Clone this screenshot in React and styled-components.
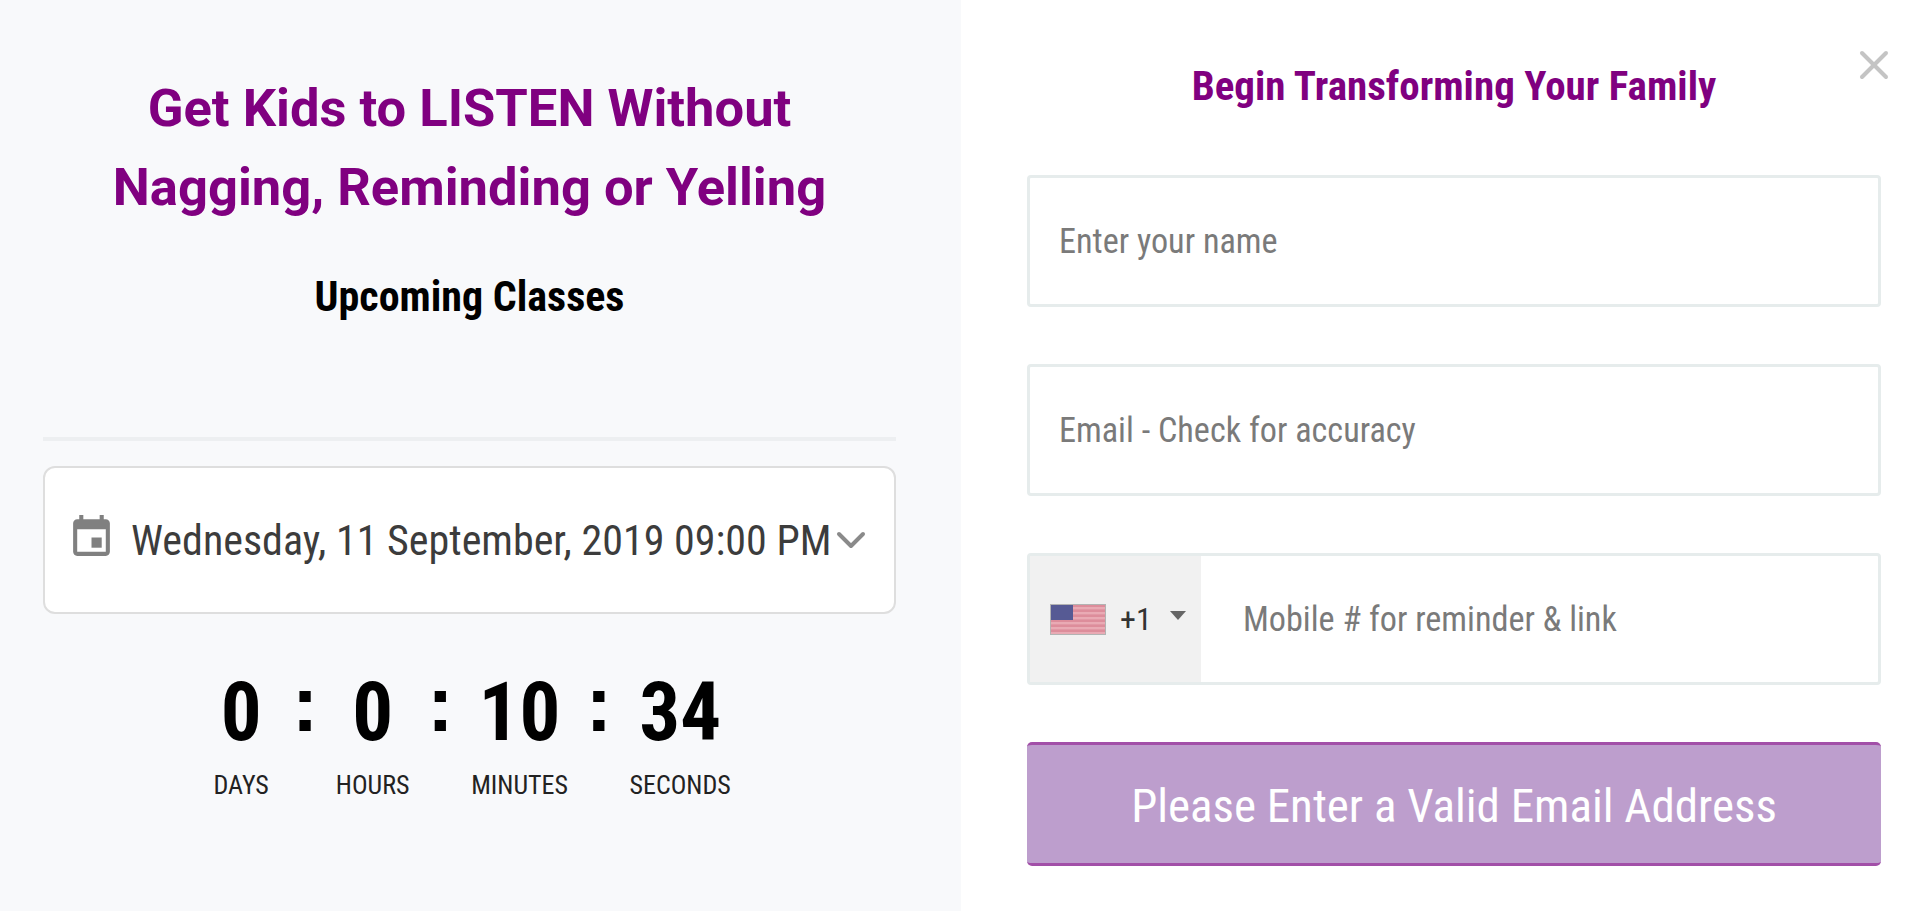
import React from "react";
import styled, { createGlobalStyle } from "styled-components";
import { X, ChevronDown } from "lucide-react";

const GlobalStyle = createGlobalStyle`
  * { box-sizing: border-box; }
  html, body { margin: 0; height: 100%; background: #fff; }
  body { font-family: Roboto, "Liberation Sans", sans-serif; font-stretch: 75%; }
`;

const units = [
  { value: "0", label: "DAYS" },
  { value: "0", label: "HOURS" },
  { value: "10", label: "MINUTES" },
  { value: "34", label: "SECONDS" },
];

const FlagIcon = () => (
  <svg width="56" height="31" viewBox="0 0 56 31">
    <rect width="56" height="31" fill="#dd8d9b" />
    {[3, 8, 13, 18, 23, 28].map((y) => (
      <rect key={y} y={y} width="56" height="2.4" fill="#e9aab4" />
    ))}
    <rect width="23" height="16" fill="#565a94" />
    <rect x="0.5" y="0.5" width="55" height="30" fill="none" stroke="#b3b3b3" />
  </svg>
);

const CalendarIcon = () => (
  <CalendarSvg width="49" height="49" viewBox="0 0 24 24" fill="#808080">
    <path d="M19 3h-1V1h-2v2H8V1H6v2H5c-1.1 0-2 .9-2 2v14c0 1.1.9 2 2 2h14c1.1 0 2-.9 2-2V5c0-1.1-.9-2-2-2zm0 16H5V8h14v11z" />
    <path d="M12 12h5v5h-5z" />
  </CalendarSvg>
);

const App = () => (
  <Page>
    <GlobalStyle />
    <Left>
      <Headline>
        Get Kids to LISTEN Without
        <br />
        Nagging, Reminding or Yelling
      </Headline>
      <Upcoming>Upcoming Classes</Upcoming>
      <Divider />
      <DateSelect>
        <CalendarIcon />
        <DateText>Wednesday, 11 September, 2019 09:00 PM</DateText>
        <ChevronDown size={48} color="#8a8a8a" strokeWidth={2} />
      </DateSelect>
      <Countdown>
        {units.map((unit, i) => (
          <React.Fragment key={unit.label}>
            {i > 0 && <Colon>:</Colon>}
            <Unit>
              <Digits>{unit.value}</Digits>
              <UnitLabel>{unit.label}</UnitLabel>
            </Unit>
          </React.Fragment>
        ))}
      </Countdown>
    </Left>
    <Right>
      <CloseButton aria-label="Close">
        <X size={48} color="#c4c4c4" strokeWidth={2} />
      </CloseButton>
      <FormTitle>Begin Transforming Your Family</FormTitle>
      <Field>
        <Input placeholder="Enter your name" />
      </Field>
      <Field>
        <Input placeholder="Email - Check for accuracy" />
      </Field>
      <Field>
        <CountryCode>
          <FlagIcon />
          <Dial>+1</Dial>
          <Caret />
        </CountryCode>
        <Input $phone placeholder="Mobile # for reminder & link" />
      </Field>
      <Submit>Please Enter a Valid Email Address</Submit>
    </Right>
  </Page>
);

const Page = styled.div`
  display: flex;
  width: 100%;
  height: 911px;
  overflow: hidden;
`;

const Left = styled.div`
  width: 961px;
  background: #f8f9fb;
  padding: 69px 65px 0 43px;
  display: flex;
  flex-direction: column;
  align-items: stretch;
`;

const Headline = styled.h1`
  margin: 0;
  color: #800080;
  font-size: 52.5px;
  font-weight: 700;
  font-stretch: 100%;
  line-height: 79px;
  text-align: center;
`;

const Upcoming = styled.h2`
  margin: 45px 0 0;
  color: #000;
  font-size: 42px;
  font-weight: 700;
  line-height: 50px;
  text-align: center;
`;

const Divider = styled.div`
  height: 4px;
  margin-top: 115px;
  background: #edeff1;
`;

const DateSelect = styled.div`
  display: flex;
  align-items: center;
  height: 148px;
  margin-top: 25px;
  padding: 0 19px 0 22px;
  background: #fff;
  border: 2px solid #dedede;
  border-radius: 12px;
`;

const CalendarSvg = styled.svg`
  flex: none;
  margin-top: -5px;
`;

const DateText = styled.span`
  margin-left: 15px;
  flex: 1;
  min-width: 0;
  color: #3c3c3c;
  font-size: 42px;
  white-space: nowrap;
`;

const Countdown = styled.div`
  display: flex;
  justify-content: center;
  align-items: flex-start;
  margin-top: 49px;
`;

const Unit = styled.div`
  display: flex;
  flex-direction: column;
  align-items: center;
  min-width: 66px;
`;

const Digits = styled.div`
  color: #000;
  font-size: 81px;
  font-weight: 700;
  line-height: 100px;
`;

const UnitLabel = styled.div`
  margin-top: 7px;
  color: #222;
  font-size: 26px;
  line-height: 30px;
`;

const Colon = styled.div`
  color: #000;
  font-family: "Liberation Sans", sans-serif;
  font-size: 80px;
  font-weight: 700;
  line-height: 81px;
  padding: 0 17.5px;
`;

const Right = styled.div`
  position: relative;
  flex: 1;
  background: #fff;
  padding: 58px 39px 0 66px;
  display: flex;
  flex-direction: column;
`;

const CloseButton = styled.button`
  position: absolute;
  top: 41px;
  right: 22px;
  padding: 0;
  border: 0;
  background: none;
  line-height: 0;
`;

const FormTitle = styled.h2`
  margin: 0 0 61px;
  color: #800080;
  font-size: 41px;
  font-weight: 700;
  line-height: 56px;
  text-align: center;
`;

const Field = styled.div`
  display: flex;
  height: 132px;
  margin-bottom: 57px;
  background: #fff;
  border: 3px solid #e6ecec;
  border-radius: 4px;
`;

const Input = styled.input`
  flex: 1;
  min-width: 0;
  border: 0;
  outline: 0;
  background: transparent;
  padding: 0 0 0 ${(p) => (p.$phone ? "42px" : "29px")};
  font-family: inherit;
  font-stretch: 75%;
  font-size: 34.2px;
  color: #555;
  &::placeholder {
    color: #7a7a7a;
    opacity: 1;
  }
`;

const CountryCode = styled.div`
  display: flex;
  align-items: center;
  width: 171px;
  padding-left: 20px;
  background: #f1f1f1;
`;

const Dial = styled.span`
  margin-left: 14px;
  color: #333;
  font-size: 32px;
`;

const Caret = styled.span`
  margin: 0 0 8px 18px;
  border-left: 8px solid transparent;
  border-right: 8px solid transparent;
  border-top: 9px solid #666;
`;

const Submit = styled.button`
  height: 124px;
  padding-top: 4px;
  border: 0;
  border-top: 3px solid #a24fa8;
  border-bottom: 3px solid #a24fa8;
  border-radius: 5px;
  background: #bd9ecd;
  color: #fff;
  font-family: inherit;
  font-stretch: 75%;
  font-size: 47px;
`;

export default App;
